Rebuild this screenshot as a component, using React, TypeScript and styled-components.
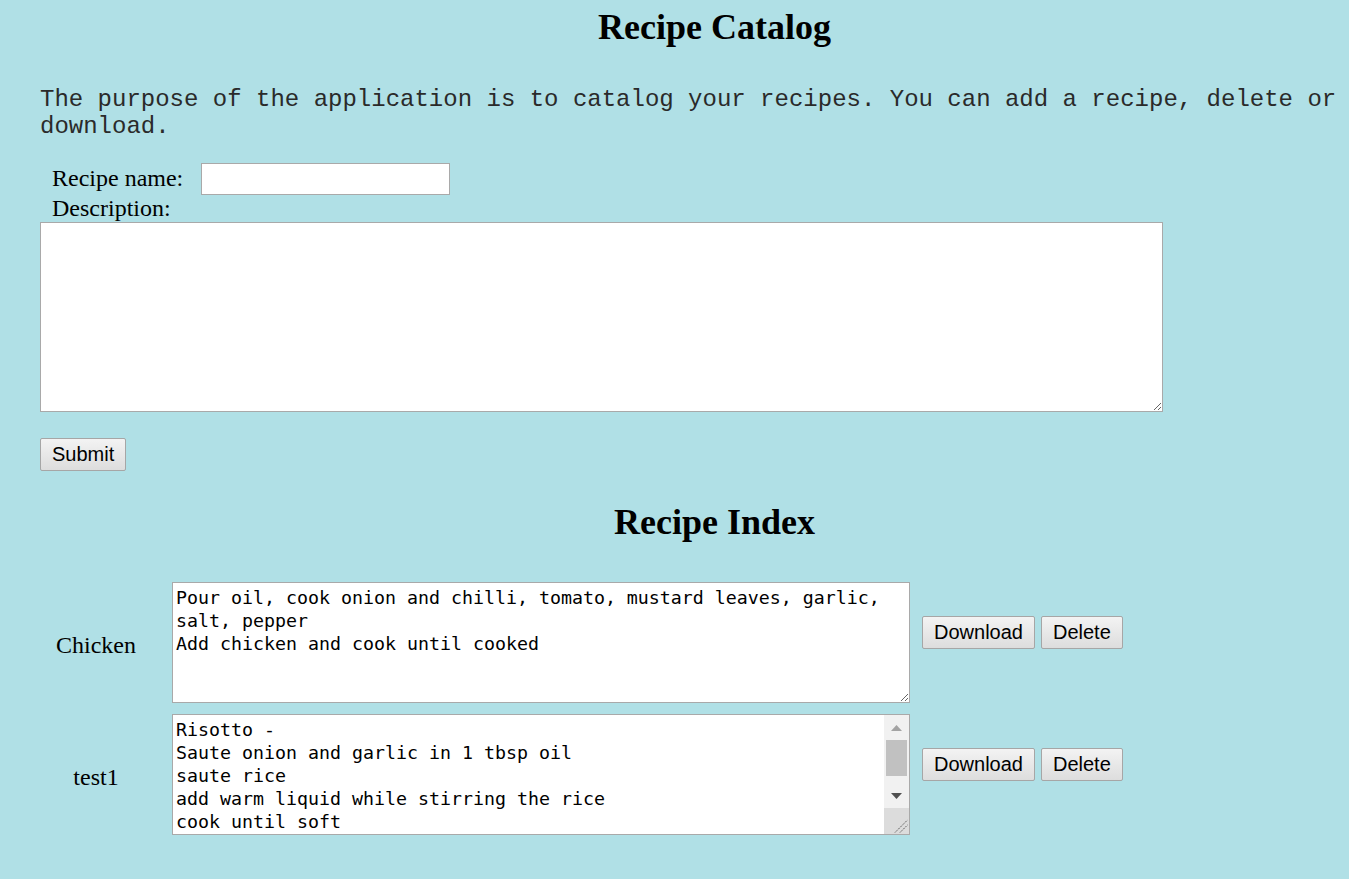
import React from 'react';
import styled, { createGlobalStyle } from 'styled-components';

const Global = createGlobalStyle`
  html, body {
    margin: 0;
    padding: 0;
    background: #b0e0e6;
    overflow-x: hidden;
  }
  body {
    font-family: "Liberation Serif", "Times New Roman", serif;
    font-size: 24px;
    color: #000;
  }
`;

const Page = styled.main`
  margin-left: 40px;
  width: 1349px;
  display: flex;
  flex-direction: column;
`;

const Heading = styled.h1<{ $top: number; $bottom: number }>`
  margin: ${(p) => p.$top}px 0 ${(p) => p.$bottom}px;
  font-family: "Liberation Serif", "Times New Roman", serif;
  font-size: 36px;
  font-weight: bold;
  line-height: 41px;
  text-align: center;
`;

const Intro = styled.p`
  margin: 0;
  font-family: "Liberation Mono", "Courier New", monospace;
  font-size: 24px;
  line-height: 27px;
  color: #2a2a2a;
`;

const Form = styled.form`
  margin-top: 23px;
  display: flex;
  flex-direction: column;
  align-items: flex-start;
`;

const NameRow = styled.div`
  display: flex;
  align-items: flex-start;
  gap: 18px;
  height: 31px;
  padding-left: 12px;
`;

const Label = styled.label`
  line-height: 28px;
  white-space: nowrap;
`;

const NameLabel = styled(Label)`
  padding-top: 1px;
`;

const DescLabel = styled(Label)`
  padding-left: 12px;
`;

const TextInput = styled.input`
  box-sizing: border-box;
  width: 249px;
  height: 32px;
  margin: 0;
  padding: 1px 3px;
  border: 1px solid #a9a9a9;
  background: #fff;
  font-family: "Liberation Sans", Arial, sans-serif;
  font-size: 20px;
`;

const DescArea = styled.textarea`
  display: block;
  box-sizing: border-box;
  width: 1123px;
  height: 190px;
  margin: 0;
  padding: 3px;
  border: 1px solid #a9a9a9;
  background: #fff;
  font-family: "DejaVu Sans Mono", monospace;
  font-size: 18.27px;
  line-height: 23px;
`;

const Button = styled.button`
  box-sizing: border-box;
  height: 33px;
  margin: 0;
  padding: 0 11px;
  border: 1px solid #a6a6a6;
  border-radius: 2px;
  background: linear-gradient(#f3f3f3, #dddddd);
  color: #000;
  font-family: "Liberation Sans", Arial, sans-serif;
  font-size: 20px;
  line-height: 31px;
  white-space: nowrap;
`;

const SubmitButton = styled(Button)`
  margin-top: 26px;
`;

const RecipeTable = styled.div`
  display: flex;
  flex-direction: column;
  gap: 5px;
`;

const RecipeRow = styled.div`
  display: flex;
  align-items: center;
`;

const NameCell = styled.div`
  width: 112px;
  padding-bottom: 2px;
  text-align: center;
  line-height: 28px;
`;

const DescCell = styled.div`
  position: relative;
  margin-left: 20px;
  margin-bottom: 6px;
`;

const RecipeText = styled.textarea<{ $scroll?: boolean }>`
  display: block;
  box-sizing: border-box;
  width: 738px;
  height: 121px;
  margin: 0;
  padding: ${(p) => (p.$scroll ? '3px 28px 3px 3px' : '3px')};
  border: 1px solid #a9a9a9;
  background: #fff;
  color: #000;
  font-family: "DejaVu Sans Mono", monospace;
  font-size: 18.27px;
  line-height: 23px;
  overflow: ${(p) => (p.$scroll ? 'hidden' : 'auto')};
  resize: ${(p) => (p.$scroll ? 'none' : 'both')};
`;

const ScrollBar = styled.div`
  position: absolute;
  top: 1px;
  right: 1px;
  bottom: 1px;
  width: 25px;
  display: flex;
  flex-direction: column;
  background: #f1f1f1;
  pointer-events: none;
`;

const ArrowButton = styled.div`
  height: 25px;
  flex: none;
  display: flex;
  align-items: center;
  justify-content: center;
`;

const Track = styled.div`
  flex: 1;
  display: flex;
  flex-direction: column;
`;

const Thumb = styled.div`
  height: 36px;
  margin: 0 2px;
  background: #c1c1c1;
`;

const Corner = styled.div`
  height: 26px;
  flex: none;
  background: #dcdcdc;
`;

const Actions = styled.div`
  display: flex;
  gap: 6px;
  margin-left: 12px;
  margin-bottom: 26px;
`;

const UpArrow = () => (
  <svg width="11" height="6" viewBox="0 0 11 6">
    <path d="M5.5 0 L11 6 L0 6 Z" fill="#a3a3a3" />
  </svg>
);

const DownArrow = () => (
  <svg width="11" height="6" viewBox="0 0 11 6">
    <path d="M0 0 L11 0 L5.5 6 Z" fill="#505050" />
  </svg>
);

const Grip = () => (
  <svg width="25" height="26" viewBox="0 0 25 26">
    <path d="M11 24.5 L23.5 12" stroke="#555" strokeWidth="1" strokeDasharray="1.5 1" />
    <path d="M16 24.5 L23.5 17" stroke="#555" strokeWidth="1" strokeDasharray="1.5 1" />
  </svg>
);

const recipes = [
  {
    name: 'Chicken',
    text: 'Pour oil, cook onion and chilli, tomato, mustard leaves, garlic, salt, pepper\nAdd chicken and cook until cooked',
    scroll: false,
  },
  {
    name: 'test1',
    text: 'Risotto -\nSaute onion and garlic in 1 tbsp oil\nsaute rice\nadd warm liquid while stirring the rice\ncook until soft\n',
    scroll: true,
  },
];

export default function App() {
  return (
    <>
      <Global />
      <Page>
        <Heading $top={7} $bottom={38}>Recipe Catalog</Heading>
        <Intro>
          The purpose of the application is to catalog your recipes. You can add a recipe, delete or download.
        </Intro>
        <Form onSubmit={(e) => e.preventDefault()}>
          <NameRow>
            <NameLabel htmlFor="recipe-name">Recipe name:</NameLabel>
            <TextInput id="recipe-name" type="text" />
          </NameRow>
          <DescLabel htmlFor="recipe-desc">Description:</DescLabel>
          <DescArea id="recipe-desc" />
          <SubmitButton type="submit">Submit</SubmitButton>
        </Form>
        <Heading $top={31} $bottom={39}>Recipe Index</Heading>
        <RecipeTable>
          {recipes.map((r) => (
            <RecipeRow key={r.name}>
              <NameCell>{r.name}</NameCell>
              <DescCell>
                <RecipeText $scroll={r.scroll} defaultValue={r.text} />
                {r.scroll && (
                  <ScrollBar>
                    <ArrowButton>
                      <UpArrow />
                    </ArrowButton>
                    <Track>
                      <Thumb />
                    </Track>
                    <ArrowButton>
                      <DownArrow />
                    </ArrowButton>
                    <Corner>
                      <Grip />
                    </Corner>
                  </ScrollBar>
                )}
              </DescCell>
              <Actions>
                <Button type="button">Download</Button>
                <Button type="button">Delete</Button>
              </Actions>
            </RecipeRow>
          ))}
        </RecipeTable>
      </Page>
    </>
  );
}
